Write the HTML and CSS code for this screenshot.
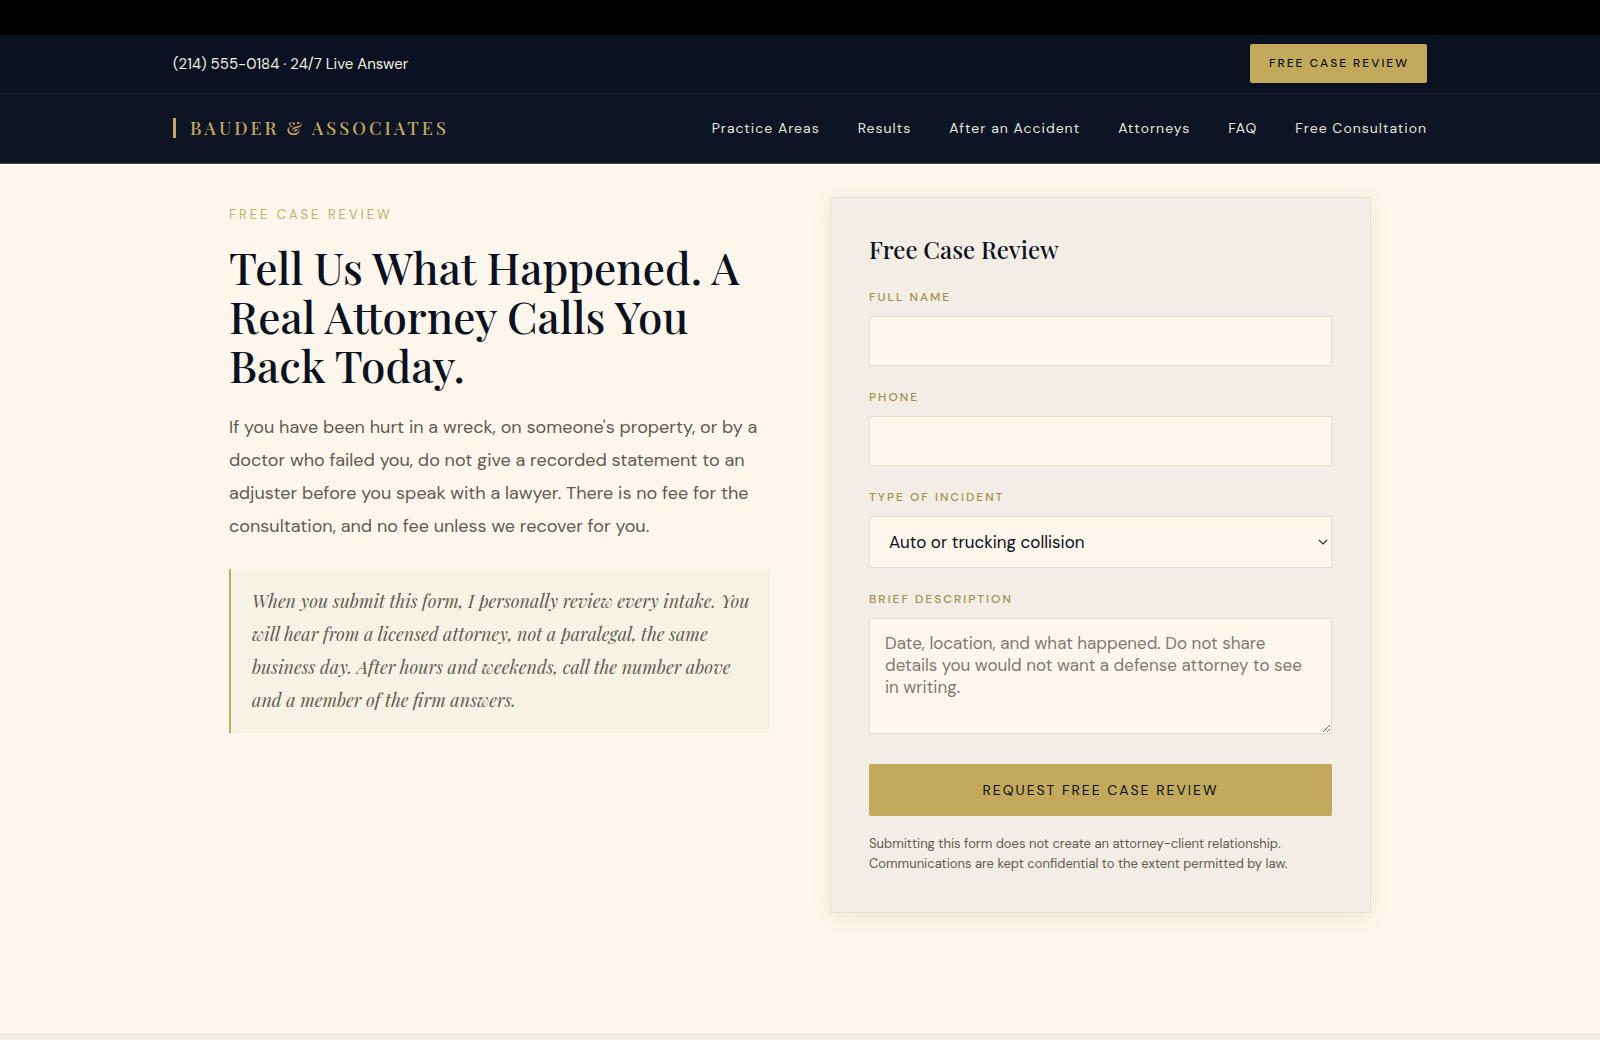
FILE: index.html
```html
<!DOCTYPE html>
<html lang="en">
<head>
  <meta charset="utf-8">
  <meta name="viewport" content="width=device-width, initial-scale=1">
  <title>Free Case Review | Bauder &amp; Associates</title>
  <link rel="stylesheet" href="styles.css">
</head>
<body>
  <header class="site-header">
    <div class="topbar">
      <div class="container topbar-inner">
        <a class="phone" href="tel:+12145550184">(214) 555-0184 · 24/7 Live Answer</a>
        <a class="topbar-cta" href="#review">FREE CASE REVIEW</a>
      </div>
    </div>
    <div class="navbar">
      <div class="container navbar-inner">
        <a class="brand" href="#">BAUDER &amp; ASSOCIATES</a>
        <nav class="nav" aria-label="Main">
          <a href="#">Practice Areas</a>
          <a href="#">Results</a>
          <a href="#">After an Accident</a>
          <a href="#">Attorneys</a>
          <a href="#">FAQ</a>
          <a href="#">Free Consultation</a>
        </nav>
      </div>
    </div>
  </header>

  <main class="intake">
    <section class="intro">
      <p class="eyebrow">FREE CASE REVIEW</p>
      <h1>Tell Us What Happened. A Real Attorney Calls You Back Today.</h1>
      <p class="lead">If you have been hurt in a wreck, on someone's property, or by a doctor who failed you, do not give a recorded statement to an adjuster before you speak with a lawyer. There is no fee for the consultation, and no fee unless we recover for you.</p>
      <blockquote class="pledge">When you submit this form, I personally review every intake. You will hear from a licensed attorney, not a paralegal, the same business day. After hours and weekends, call the number above and a member of the firm answers.</blockquote>
    </section>

    <form class="card" id="review">
      <h2>Free Case Review</h2>
      <div class="field">
        <label for="name">FULL NAME</label>
        <input class="control" id="name" type="text">
      </div>
      <div class="field">
        <label for="phone">PHONE</label>
        <input class="control" id="phone" type="tel">
      </div>
      <div class="field">
        <label for="incident">TYPE OF INCIDENT</label>
        <div class="select-wrap">
          <select class="control" id="incident">
            <option>Auto or trucking collision</option>
          </select>
          <svg class="chevron" width="10" height="6" viewBox="0 0 10 6" aria-hidden="true"><path d="M0.8 0.8 L5 5 L9.2 0.8" fill="none" stroke="#2a2a2a" stroke-width="1.2"/></svg>
        </div>
      </div>
      <div class="field">
        <label for="description">BRIEF DESCRIPTION</label>
        <textarea class="control" id="description" placeholder="Date, location, and what happened. Do not share details you would not want a defense attorney to see in writing."></textarea>
      </div>
      <button class="submit" type="button">REQUEST FREE CASE REVIEW</button>
      <p class="note">Submitting this form does not create an attorney-client relationship. Communications are kept confidential to the extent permitted by law.</p>
    </form>
  </main>

  <div class="band"></div>
</body>
</html>
```
FILE: styles.css
```css
:root {
  --navy-deep: #0a1120;
  --navy: #0d1424;
  --cream: #fdf6ec;
  --stone: #f2ede5;
  --gold: #c3a95b;
  --gold-dark: #a4914a;
  --body: #605c50;
  --sans: "DM Sans", Lato, sans-serif;
  --serif: "Playfair Display", "Liberation Serif", serif;
}

*,
*::before,
*::after {
  box-sizing: border-box;
}

body {
  margin: 0;
  min-height: 100vh;
  display: flex;
  flex-direction: column;
  background: var(--cream);
  color: var(--navy-deep);
  font-family: var(--sans);
}

h1,
h2,
p,
blockquote {
  margin: 0;
}

a {
  color: inherit;
  text-decoration: none;
}

/* Header */
.site-header {
  border-top: 35px solid #000;
}

.container {
  width: 100%;
  max-width: 1302px;
  margin: 0 auto;
  padding: 0 24px;
}

.topbar {
  background: var(--navy-deep);
  border-bottom: 1px solid #1b202a;
}

.topbar-inner {
  display: flex;
  align-items: center;
  justify-content: space-between;
  padding-top: 9px;
  padding-bottom: 10px;
}

.phone {
  color: #f1ece4;
  font-size: 15px;
}

.topbar-cta {
  padding: 0 18px 0 19px;
  border-radius: 2px;
  background: var(--gold);
  color: var(--navy-deep);
  font-size: 12px;
  font-weight: 500;
  line-height: 39px;
  letter-spacing: 2px;
}

.navbar {
  background: var(--navy);
  border-bottom: 1px solid #4a4a48;
}

.navbar-inner {
  display: flex;
  align-items: center;
  justify-content: space-between;
  min-height: 69px;
  padding-bottom: 1px;
}

.brand {
  padding-left: 14px;
  border-left: 3px solid var(--gold);
  color: var(--gold);
  font-family: var(--serif);
  font-size: 18px;
  font-weight: 500;
  line-height: 20px;
  letter-spacing: 3px;
}

.nav {
  display: flex;
  gap: 38px;
  color: #e6e4df;
  font-size: 14px;
  letter-spacing: 1px;
}

/* Intake */
.intake {
  display: grid;
  grid-template-columns: 1fr 1fr;
  align-items: start;
  gap: 60px;
  width: 100%;
  max-width: 1190px;
  margin: 0 auto;
  padding: 33px 24px 120px;
}

.intro {
  padding-top: 9px;
}

.eyebrow {
  margin-bottom: 18px;
  color: #c4b067;
  font-size: 13px;
  line-height: 18px;
  letter-spacing: 3px;
}

h1 {
  margin-bottom: 22px;
  font-family: var(--serif);
  font-size: 44px;
  font-weight: 500;
  line-height: 49px;
}

.lead {
  margin-bottom: 26px;
  color: var(--body);
  font-size: 18px;
  line-height: 33px;
}

.pledge {
  padding: 16px 16px 16px 21px;
  border-left: 2px solid var(--gold);
  background: #f7f2e6;
  color: var(--body);
  font-family: var(--serif);
  font-size: 18px;
  font-style: italic;
  line-height: 33px;
}

.card {
  padding: 38px;
  border: 1px solid #e9e4d0;
  border-radius: 2px;
  background: var(--stone);
  box-shadow: 0 4px 20px rgba(60, 80, 30, 0.09);
}

h2 {
  margin-bottom: 25px;
  font-family: var(--serif);
  font-size: 24px;
  font-weight: 500;
  line-height: 27px;
}

.field {
  display: flex;
  flex-direction: column;
  gap: 10px;
  margin-bottom: 22px;
}

.field label {
  color: var(--gold-dark);
  font-size: 12px;
  font-weight: 500;
  line-height: 18px;
  letter-spacing: 2px;
}

.control {
  display: block;
  width: 100%;
  height: 50px;
  padding: 13px 15px;
  border: 1px solid #e2ddcd;
  border-radius: 2px;
  background-color: var(--cream);
  color: var(--navy-deep);
  font-family: inherit;
  font-size: 17px;
  line-height: 22px;
}

.select-wrap {
  position: relative;
}

select.control {
  height: 52px;
  padding-left: 19px;
  appearance: none;
}

.chevron {
  position: absolute;
  top: 23px;
  right: 4px;
  pointer-events: none;
}

textarea.control {
  height: 116px;
  resize: vertical;
}

.control::placeholder {
  color: #7d7b73;
}

.submit {
  width: 100%;
  height: 52px;
  margin-top: 8px;
  border: 0;
  border-radius: 2px;
  background: var(--gold);
  color: var(--navy-deep);
  font-family: inherit;
  font-size: 14px;
  letter-spacing: 2px;
}

.note {
  margin-top: 18px;
  color: var(--body);
  font-size: 13px;
  line-height: 20px;
}

.band {
  flex: 1;
  background: var(--stone);
}

@media (max-width: 900px) {
  .intake {
    grid-template-columns: 1fr;
  }

  .navbar-inner,
  .nav {
    flex-wrap: wrap;
  }
}
```
